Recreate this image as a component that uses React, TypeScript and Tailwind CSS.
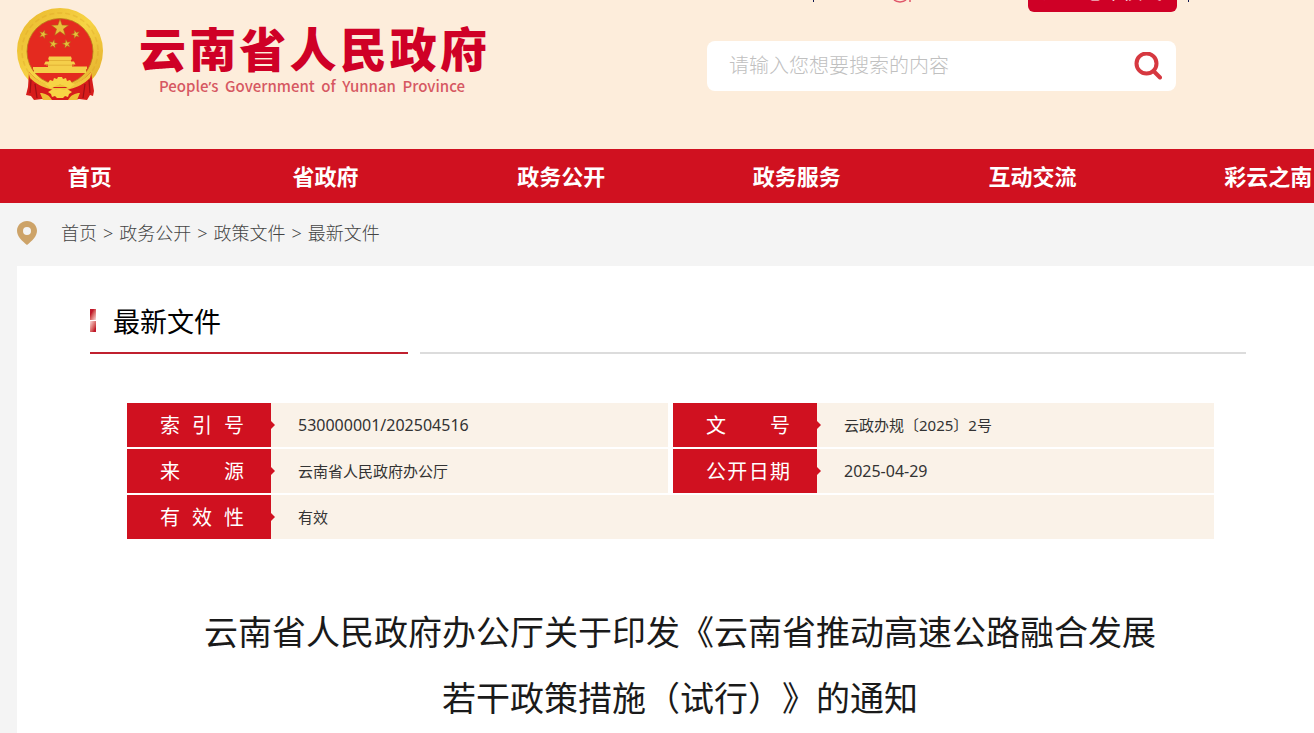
import { useState } from 'react';

const NAV_ITEMS = ['首页', '省政府', '政务公开', '政务服务', '互动交流', '彩云之南'];

const BREADCRUMBS = ['首页', '政务公开', '政策文件', '最新文件'];

const star = (cx: number, cy: number, r: number, tilt = 0) =>
  Array.from({ length: 10 }, (_, i) => {
    const radius = i % 2 === 0 ? r : r * 0.4;
    const angle = (Math.PI / 5) * i - Math.PI / 2 + tilt;
    return `${(cx + radius * Math.cos(angle)).toFixed(2)},${(cy + radius * Math.sin(angle)).toFixed(2)}`;
  }).join(' ');

const Emblem = () => (
  <svg viewBox="0 0 86 93" className="h-[93px] w-[86px] shrink-0" aria-hidden="true">
    <defs>
      <linearGradient id="gold" x1="0" y1="0" x2="1" y2="1">
        <stop offset="0" stopColor="#e8b62c" />
        <stop offset="0.5" stopColor="#f7d445" />
        <stop offset="1" stopColor="#e0a827" />
      </linearGradient>
    </defs>
    <circle cx="43" cy="43" r="43" fill="url(#gold)" />
    <circle cx="43" cy="43" r="38" fill="none" stroke="#d69a22" strokeWidth="1.5" strokeDasharray="5 3" opacity="0.3" />
    <circle cx="43" cy="43.5" r="33" fill="#e42a1f" stroke="#b87a1c" strokeWidth="0.8" />
    <g fill="#e9bd3a" stroke="#a86a16" strokeWidth="0.5">
      <polygon points={star(43, 20, 9)} />
      <polygon points={star(26.3, 26.3, 4.5, 0.3)} />
      <polygon points={star(58.7, 26.3, 4.5, -0.3)} />
      <polygon points={star(36.3, 36, 4.5, 0.2)} />
      <polygon points={star(49.7, 36, 4.5, -0.2)} />
    </g>
    {/* gate tower */}
    <path d="M32 48.5h22l1 3h-1v2h3l1.5 3H55v2h15v2.5l-1 .5v3.500H17V62l-1-.5V59h15v-2.500h-4l1.500-3H32v-2h-1z" fill="#f5cf4a" />
    <path d="M32 52.500h22M29 57.200h28" stroke="#dba62d" strokeWidth="0.7" />
    {/* drapes */}
    <path d="M12 64c5 6 12 11 22 15h18c10-4 17-9 22-15l3 19-1 5-3-1-3 5-8-1-4 1H29l-4-1-8 1-3-4-5-1 2-8z" fill="#d61c1b" />
    <path d="M14 72l-1 13M18 76l2 14M72 72l1 13M68 76l-2 14" stroke="#9e1015" strokeWidth="1.2" />
    <path d="M11 63c6 7 12 11 23 15l3 2h12l3-2c11-4 17-8 23-15l-2 7c-6 6-12 9-20 11-6 2-14 2-20 0-8-2-14-5-20-11z" fill="#f0c43c" />
    {/* gear */}
    <path d="M31 75l2-3 3 1 1-3 3 1 1-2h4l1 2 3-1 1 3 3-1 2 3 3 1-5 4-4-1c-3-3-9-3-12 0l-4 1-5-4z" fill="#f7d445" />
    <path d="M31 84l5-3 3 1 4-1 4 1 3-1 5 3-3 2-1 3-3-1-2 2h-6l-2-2-3 1-1-3z" fill="#f7d445" />
    <path d="M23 85c5 0 9 2 12 7H26zM63 85c-5 0-9 2-12 7h9z" fill="#efbf35" />
  </svg>
);

const SearchIcon = () => (
  <svg viewBox="0 0 28 28" className="size-7" fill="none" stroke="#d63840" aria-hidden="true">
    <circle cx="12.500" cy="11.500" r="10" strokeWidth="4" />
    <path d="M19.500 19l6.500 6.500" strokeWidth="4" strokeLinecap="round" />
  </svg>
);

const PinIcon = () => (
  <svg viewBox="0 0 20 24" className="h-6 w-5" aria-hidden="true">
    <path
      fillRule="evenodd"
      fill="#cda368"
      d="M10 0C4.500 0 0 4.300 0 9.800 0 15.500 5 20 10 24c5-4 10-8.500 10-14.200C20 4.300 15.500 0 10 0zm0 6a4 4 0 1 1 0 8 4 4 0 0 1 0-8z"
    />
  </svg>
);

const LabelCell = ({ text, spaced = false }: { text: string; spaced?: boolean }) => (
  <th
    scope="row"
    className={`h-[46px] border-b-2 border-white p-0 font-normal ${spaced ? 'border-l-[5px]' : ''}`}
  >
    <div className="relative h-full bg-[#d01120] pt-0.5 pr-[27px] pl-[33px] text-[20px] leading-[42px] text-white [text-align-last:justify]">
      {text}
      <span className="absolute top-[18px] -right-1 h-0 w-0 border-y-4 border-l-4 border-y-transparent border-l-[#d01120]" />
    </div>
  </th>
);

const ValueCell = ({ text, numeric = false, span = 1 }: { text: string; numeric?: boolean; span?: number }) => (
  <td
    colSpan={span}
    className={`border-b-2 border-white bg-[#faf2e8] p-0 pl-[27px] text-[#333] ${numeric ? 'text-[16px]' : 'text-[15px]'}`}
  >
    {text}
  </td>
);

export default function App() {
  const [keyword, setKeyword] = useState('');

  return (
    <div className="flex min-h-screen flex-col overflow-x-hidden bg-[#f4f4f4] font-['Noto_Sans','Noto_Sans_CJK_SC',sans-serif]">
      <header className="flex items-start justify-between bg-[#fdeddb] pb-12">
        <div className="flex pt-2 pl-[17px]">
          <Emblem />
          <div className="ml-9 font-['Noto_Sans_CJK_SC',sans-serif]">
            <h1 className="mt-3.5 w-[348px] text-[47px] leading-[50px] font-black text-[#cf0026] [text-align-last:justify]">
              云南省人民政府
            </h1>
            <p className="mt-0.5 ml-5 w-[306px] text-[15px] leading-6 font-medium whitespace-nowrap text-[#d65862] [text-align-last:justify]">
              People<span className="font-['Noto_Sans',sans-serif]">’</span>s Government of Yunnan Province
            </p>
          </div>
        </div>

        <div className="mr-[125px] w-[482px]">
          <div className="flex h-3 items-start overflow-hidden">
            <span className="ml-[106px] h-0.5 w-px bg-[#101850]" />
            <svg viewBox="0 0 20 3" className="ml-[79px] h-[3px] w-5" fill="none" stroke="#e0566a" aria-hidden="true">
              <path d="M1 0c3 2.500 9 2.500 12 0M17 0v2" strokeWidth="1.500" />
            </svg>
            <div className="ml-auto flex h-3 items-end gap-[11px]">
              <button
                type="button"
                className="w-[149px] shrink-0 rounded-md bg-[#cf0026] pt-2 pb-2.5 text-[20px] leading-5 text-white"
              >
                进入老年模式
              </button>
              <span className="mb-2.5 h-0.5 w-px bg-[#101850]" />
            </div>
          </div>
          <form
            className="mt-[29px] flex h-[50px] w-[469px] items-center rounded-lg bg-white pr-3.5 pl-[22px]"
            onSubmit={(e) => e.preventDefault()}
          >
            <input
              type="text"
              aria-label="搜索"
              value={keyword}
              onChange={(e) => setKeyword(e.target.value)}
              placeholder="请输入您想要搜索的内容"
              className="min-w-0 flex-1 bg-transparent text-[20px] font-light text-[#333] outline-none placeholder:text-[#c0c0c0]"
            />
            <button type="submit" aria-label="搜索">
              <SearchIcon />
            </button>
          </form>
        </div>
      </header>

      <nav className="overflow-hidden bg-[#d01120]">
        <ul className="-mr-[72px] -ml-7 grid grid-cols-6">
          {NAV_ITEMS.map((item) => (
            <li key={item} className="text-center">
              <a href="#" className="text-[22px] leading-[54px] font-bold text-white">
                {item}
              </a>
            </li>
          ))}
        </ul>
      </nav>

      <div className="flex h-[63px] items-center pb-1 pl-[17px]">
        <PinIcon />
        <ol className="ml-6 flex text-[18px] leading-6 font-light text-[#444]">
          {BREADCRUMBS.map((crumb, i) => (
            <li key={crumb}>
              {i > 0 && <span className="mx-1.5">&gt;</span>}
              <a href="#">{crumb}</a>
            </li>
          ))}
        </ol>
      </div>

      <main className="ml-[17px] flex-1 bg-white pr-[68px] pl-[73px]">
        <div className="flex items-center gap-[17px] pt-9">
          <span className="mb-1 flex w-1.5 flex-col gap-px">
            <span className="h-[11px] bg-linear-to-br from-[#c0182c] from-30% to-[#f6dadd]" />
            <span className="h-[11px] bg-linear-to-tl from-[#c0182c] from-20% to-[#f6dadd]" />
          </span>
          <h2 className="text-[27px] leading-10 text-black">最新文件</h2>
        </div>
        <div className="mt-2.5 flex h-0.5 gap-3">
          <span className="w-[318px] bg-[#c0202f]" />
          <span className="flex-1 bg-[#dcdcdc]" />
        </div>

        <div className="mt-[49px] pr-8 pl-[37px]">
          <table className="w-full table-fixed border-separate border-spacing-0 text-left [text-spacing-trim:space-all]">
            <colgroup>
              <col className="w-[144px]" />
              <col />
              <col className="w-[149px]" />
              <col />
            </colgroup>
            <tbody>
              <tr>
                <LabelCell text="索引号" />
                <ValueCell text="530000001/202504516" numeric />
                <LabelCell text="文号" spaced />
                <ValueCell text="云政办规〔2025〕2号" />
              </tr>
              <tr>
                <LabelCell text="来源" />
                <ValueCell text="云南省人民政府办公厅" />
                <LabelCell text="公开日期" spaced />
                <ValueCell text="2025-04-29" numeric />
              </tr>
              <tr>
                <LabelCell text="有效性" />
                <ValueCell text="有效" span={3} />
              </tr>
            </tbody>
          </table>
        </div>

        <h1 className="mt-[58px] pl-6 text-center text-[34px] leading-[66px] text-[#1a1a1a] [text-spacing-trim:space-all]">
          云南省人民政府办公厅关于印发《云南省推动高速公路融合发展
          <br />
          若干政策措施（试行）》的通知
        </h1>
      </main>
    </div>
  );
}
